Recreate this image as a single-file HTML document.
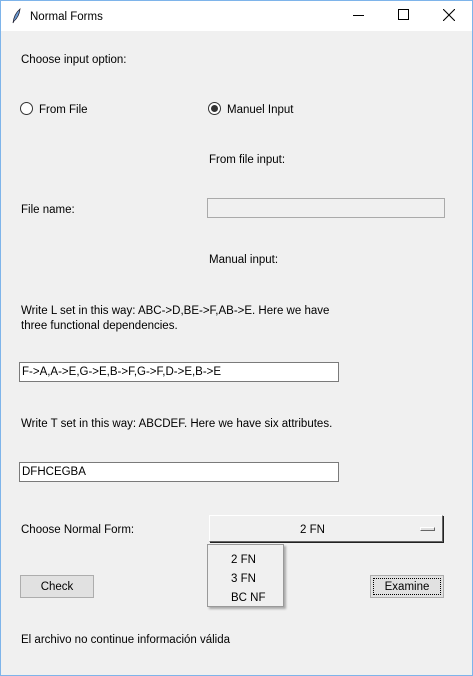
<!DOCTYPE html>
<html><head><style>
*{margin:0;padding:0;box-sizing:border-box}
body{width:473px;height:676px;background:#f0f0f0;font-family:"Liberation Sans",sans-serif;font-size:11.5px;color:#000;position:relative;overflow:hidden}
.frame{position:absolute;left:0;top:0;width:473px;height:676px;border:1px solid #7eb4ea;pointer-events:none}
.a{position:absolute;white-space:nowrap}
.t{margin-top:2px}
.title{position:absolute;left:0;top:0;width:473px;height:31px;background:#fff}
.ent{position:absolute;background:#fff;border:1px solid #7a7a7a;height:20px;padding:3px 2px 0;font-size:11.5px}
.rad{position:absolute;width:13px;height:13px;border:1px solid #333;border-radius:50%;background:#fff}
.btn{position:absolute;background:#e1e1e1;border:1px solid #adadad;text-align:center;line-height:22px}
</style></head><body>
<div class="title">
<svg class="a" style="left:11px;top:8px" width="10" height="16" viewBox="0 0 10 16"><path d="M2 15 Q3 6 9 1 Q8 9 3 13 Z" fill="#6c9bd2" stroke="#223" stroke-width="0.8"/></svg>
<div class="a t" style="left:30px;top:9px">Normal Forms</div>
<div class="a" style="left:353px;top:15px;width:11px;height:1px;background:#000"></div>
<div class="a" style="left:398px;top:9px;width:11px;height:11px;border:1px solid #000"></div>
<svg class="a" style="left:443px;top:9px" width="12" height="12"><path d="M0 0L12 12M12 0L0 12" stroke="#000" stroke-width="1.1"/></svg>
</div>
<div class="a t" style="left:21px;top:52px">Choose input option:</div>
<div class="rad" style="left:20px;top:102px"></div>
<div class="a t" style="left:39px;top:102px">From File</div>
<div class="rad" style="left:208px;top:102px"><div style="position:absolute;left:2px;top:2px;width:7px;height:7px;border-radius:50%;background:#333"></div></div>
<div class="a t" style="left:227px;top:102px">Manuel Input</div>
<div class="a t" style="left:209px;top:152px">From file input:</div>
<div class="a t" style="left:21px;top:202px">File name:</div>
<div class="ent" style="left:207px;top:198px;width:238px;background:#f0f0f0;border-color:#aaa"></div>
<div class="a t" style="left:21px;top:302px;line-height:15px">Write L set in this way: ABC-&gt;D,BE-&gt;F,AB-&gt;E. Here we have<br>three functional dependencies.</div>
<div class="a t" style="left:209px;top:252px">Manual input:</div>
<div class="ent" style="left:19px;top:362px;width:320px">F-&gt;A,A-&gt;E,G-&gt;E,B-&gt;F,G-&gt;F,D-&gt;E,B-&gt;E</div>
<div class="a t" style="left:21px;top:416px">Write T set in this way: ABCDEF. Here we have six attributes.</div>
<div class="ent" style="left:19px;top:462px;width:320px">DFHCEGBA</div>
<div class="a t" style="left:21px;top:522px">Choose Normal Form:</div>
<div class="a" style="left:209px;top:515px;width:234px;height:27px;background:#f0f0f0;border:1px solid;border-color:#fff #666 #666 #fff;box-shadow:1px 1px 0 #222"></div>
<div class="a t" style="left:300px;top:522px">2 FN</div>
<div class="a" style="left:420px;top:527px;width:15px;height:4px;border:1px solid;border-color:#fff #666 #666 #fff;background:#e0e0e0"></div>
<div class="a" style="left:207px;top:544px;width:77px;height:63px;background:#f0f0f0;border:1px solid #999;box-shadow:2px 2px 2px #aaa"></div>
<div class="a t" style="left:231px;top:549px;line-height:19px">2 FN<br>3 FN<br>BC NF</div>
<div class="btn" style="left:20px;top:575px;width:74px;height:23px">Check</div>
<div class="btn" style="left:370px;top:575px;width:74px;height:23px"><div style="position:absolute;left:2px;top:2px;right:2px;bottom:2px;border:1px dotted #000"></div>Examine</div>
<div class="a t" style="left:21px;top:632px">El archivo no continue información válida</div>
<div class="frame"></div>
</body></html>
